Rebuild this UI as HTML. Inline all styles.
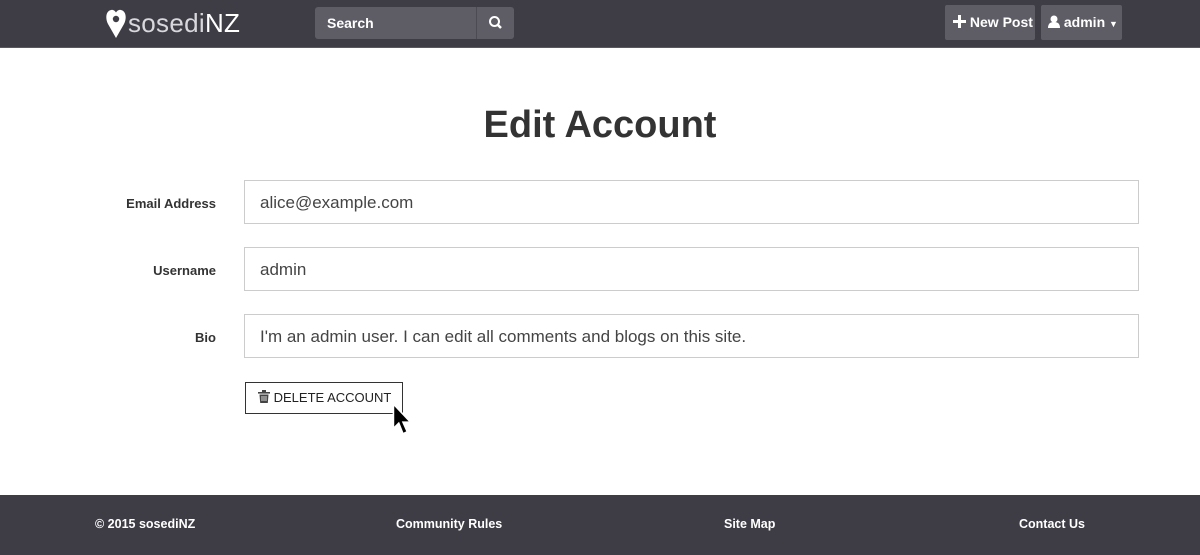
<!DOCTYPE html>
<html><head><meta charset="utf-8"><style>
*{box-sizing:border-box;margin:0;padding:0}
body{width:1200px;height:555px;background:#fff;font-family:"Liberation Sans",Arial,sans-serif;position:relative;overflow:hidden}
.nav{position:absolute;left:0;top:0;width:1200px;height:48px;background:#3e3d46;border-bottom:1px solid #5a5963}
.logo{position:absolute;left:106px;top:7px;display:flex;align-items:center;color:#fff}
.logo .t{font-size:26px;font-weight:300;color:#d8d8dc;letter-spacing:0.3px;margin-left:2px}
.logo .t b{color:#fff;font-weight:normal}
.search{position:absolute;left:315px;top:7px;width:199px;height:32px;background:#5e5d66;border-radius:3px}
.search span{position:absolute;left:12px;top:8px;color:#fff;font-weight:bold;font-size:14px}
.search .btn{position:absolute;left:161px;top:0;width:38px;height:32px;border-left:1px solid #4c4b54}
.nb{position:absolute;top:5px;height:35px;background:#5e5d66;border-radius:2px;color:#fff;font-size:14px;font-weight:bold;line-height:35px}
h1{position:absolute;top:104px;left:0;width:1200px;text-align:center;font-size:38px;font-weight:bold;color:#333}
.lbl{position:absolute;right:984px;font-size:13px;font-weight:bold;color:#333}
.inp{position:absolute;left:244px;width:895px;height:44px;border:1px solid #ccc;font-size:17px;color:#444;padding:12px 15px}
.del{position:absolute;left:245px;top:382px;width:158px;height:32px;border:1px solid #333;font-size:13px;color:#222;line-height:30px;padding-left:12px}
.foot{position:absolute;left:0;top:495px;width:1200px;height:60px;background:#3e3d46;color:#fff;font-size:12.5px;font-weight:bold}
.foot span{position:absolute;top:22px}
</style></head><body>
<div class="nav">
 <div class="logo">
  <svg width="20" height="32" viewBox="0 0 20 32"><path d="M10 31 L2 17 C-1 11 0 4 5 3 C7.5 2.5 9 4 10 5.5 C11 4 12.5 2.5 15 3 C20 4 21 11 18 17 Z" fill="#fff"/><circle cx="10" cy="12" r="3.2" fill="#3e3d46"/></svg>
  <span class="t">sosedi<b>NZ</b></span>
 </div>
 <div class="search"><span>Search</span><div class="btn"><svg width="38" height="32"><circle cx="17.5" cy="14.5" r="4.5" fill="none" stroke="#fff" stroke-width="2"/><line x1="21" y1="18" x2="24" y2="21" stroke="#fff" stroke-width="2.5"/></svg></div></div>
 <div class="nb" style="left:945px;width:90px;padding-left:8px">
  <svg width="13" height="13" viewBox="0 0 13 13" style="vertical-align:-1px"><path d="M5 0h3v5h5v3H8v5H5V8H0V5h5z" fill="#fff"/></svg> New Post</div>
 <div class="nb" style="left:1041px;width:81px;padding-left:7px">
  <svg width="12" height="13" viewBox="0 0 12 13" style="vertical-align:-1px"><circle cx="6" cy="4" r="3.5" fill="#fff"/><path d="M0 13 C0 8 3 7 6 7 C9 7 12 8 12 13Z" fill="#fff"/></svg> admin <span style="font-size:9px">▼</span></div>
</div>
<h1>Edit Account</h1>
<div class="lbl" style="top:196px">Email Address</div>
<div class="inp" style="top:180px">alice@example.com</div>
<div class="lbl" style="top:263px">Username</div>
<div class="inp" style="top:247px">admin</div>
<div class="lbl" style="top:330px">Bio</div>
<div class="inp" style="top:314px">I'm an admin user. I can edit all comments and blogs on this site.</div>
<div class="del"><svg width="12" height="13" viewBox="0 0 12 13" style="vertical-align:-1px"><rect x="0" y="2" width="12" height="1.6" fill="#444"/><rect x="4" y="0" width="4" height="2" fill="#444"/><path d="M1.5 4.5h9l-.7 8.5H2.2z" fill="#444"/><path d="M4 6v5M6 6v5M8 6v5" stroke="#fff" stroke-width="0.8"/></svg> DELETE ACCOUNT</div>
<svg style="position:absolute;left:391px;top:403px" width="24" height="34" viewBox="0 0 22 32"><path d="M2 1 L2 24 L7 19 L11 29 L15 27 L11 18 L18 18 Z" fill="#000" stroke="#fff" stroke-width="1.5"/></svg>
<div class="foot">
 <span style="left:95px">© 2015 sosediNZ</span>
 <span style="left:396px">Community Rules</span>
 <span style="left:724px">Site Map</span>
 <span style="left:1019px">Contact Us</span>
</div>
</body></html>
